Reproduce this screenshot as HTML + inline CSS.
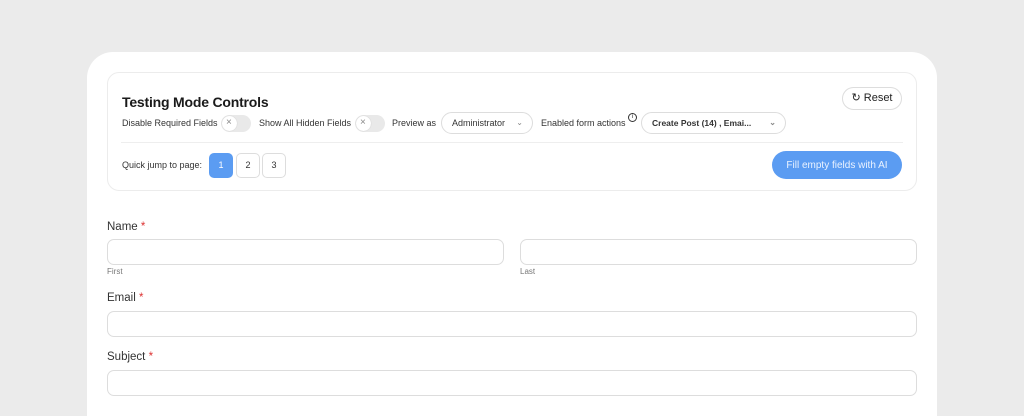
<!DOCTYPE html>
<html style="width:1024px;height:416px;overflow:hidden"><head><meta charset="utf-8"><style>
*{box-sizing:border-box;margin:0;padding:0}
body{width:1024px;height:416px;background:#ebebeb;font-family:"Liberation Sans",sans-serif;position:relative;overflow:hidden;color:#222}
.card{position:absolute;left:87px;top:52px;width:850px;height:364px;background:#fff;border-radius:26px 26px 0 0}
.panel{position:absolute;left:107px;top:72px;width:810px;height:119px;border:1px solid #ececec;border-radius:12px}
.abs{position:absolute}
.title{left:122px;top:94px;font-size:14px;font-weight:bold;color:#1a1a1a;letter-spacing:-0.2px}
.lbl{font-size:9px;color:#333;top:118px}
.tog{top:115px;width:30px;height:17px;border-radius:9px;background:#e9e9e9}
.tog::before{content:"";position:absolute;left:1px;top:1px;width:15px;height:15px;border-radius:50%;background:#fff;box-shadow:0 0 1px #bbb}
.tog::after{content:"×";position:absolute;left:5px;top:2px;font-size:10px;line-height:12px;color:#888}
.pill{top:112px;height:22px;border:1px solid #ddd;border-radius:11px;font-size:9px;line-height:20px;padding-left:10px;color:#333}
.chev{position:absolute;right:9px;top:0;font-size:8px;color:#888}
.hr{left:121px;top:142px;width:782px;height:1px;background:#eee}
.pg{top:153px;width:24px;height:25px;border:1px solid #ddd;border-radius:5px;font-size:9px;text-align:center;line-height:23px;color:#333}
.flab{font-size:11.5px;color:#333}
.flab b{color:#d33;font-weight:normal}
.inp{border:1px solid #ddd;border-radius:7px;height:26px}
.sub{font-size:8px;color:#777}
</style></head><body>
<div class="card"></div>
<div class="panel"></div>
<div class="abs title">Testing Mode Controls</div>
<div class="abs lbl" style="left:122px">Disable Required Fields</div>
<div class="abs tog" style="left:221px"></div>
<div class="abs lbl" style="left:259px">Show All Hidden Fields</div>
<div class="abs tog" style="left:355px"></div>
<div class="abs lbl" style="left:392px">Preview as</div>
<div class="abs pill" style="left:441px;width:92px">Administrator<span class="chev">⌄</span></div>
<div class="abs lbl" style="left:541px">Enabled form actions</div>
<div class="abs" style="left:628px;top:113px;width:9px;height:9px;border:1px solid #333;border-radius:50%;font-size:6px;text-align:center;line-height:7px">i</div>
<div class="abs pill" style="left:641px;width:145px;font-weight:bold;font-size:8.5px">Create Post (14) , Emai...<span class="chev">⌄</span></div>
<div class="abs" style="left:842px;top:87px;width:60px;height:23px;border:1px solid #ddd;border-radius:12px;font-size:11px;line-height:21px;text-align:center;color:#222">↻ Reset</div>
<div class="abs hr"></div>
<div class="abs lbl" style="left:122px;top:160px">Quick jump to page:</div>
<div class="abs pg" style="left:209px;background:#5b9cf2;border-color:#5b9cf2;color:#fff">1</div>
<div class="abs pg" style="left:236px">2</div>
<div class="abs pg" style="left:262px">3</div>
<div class="abs" style="left:772px;top:151px;width:130px;height:28px;border-radius:14px;background:#5b9cf2;color:#eaf2ff;font-size:10px;display:flex;align-items:center;justify-content:center">Fill empty fields with AI</div>
<div class="abs flab" style="left:107px;top:221px">Name <b>*</b></div>
<div class="abs inp" style="left:107px;top:239px;width:397px"></div>
<div class="abs inp" style="left:520px;top:239px;width:397px"></div>
<div class="abs sub" style="left:107px;top:267px">First</div>
<div class="abs sub" style="left:520px;top:267px">Last</div>
<div class="abs flab" style="left:107px;top:292px">Email <b>*</b></div>
<div class="abs inp" style="left:107px;top:311px;width:810px"></div>
<div class="abs flab" style="left:107px;top:351px">Subject <b>*</b></div>
<div class="abs inp" style="left:107px;top:370px;width:810px"></div>
</body></html>
